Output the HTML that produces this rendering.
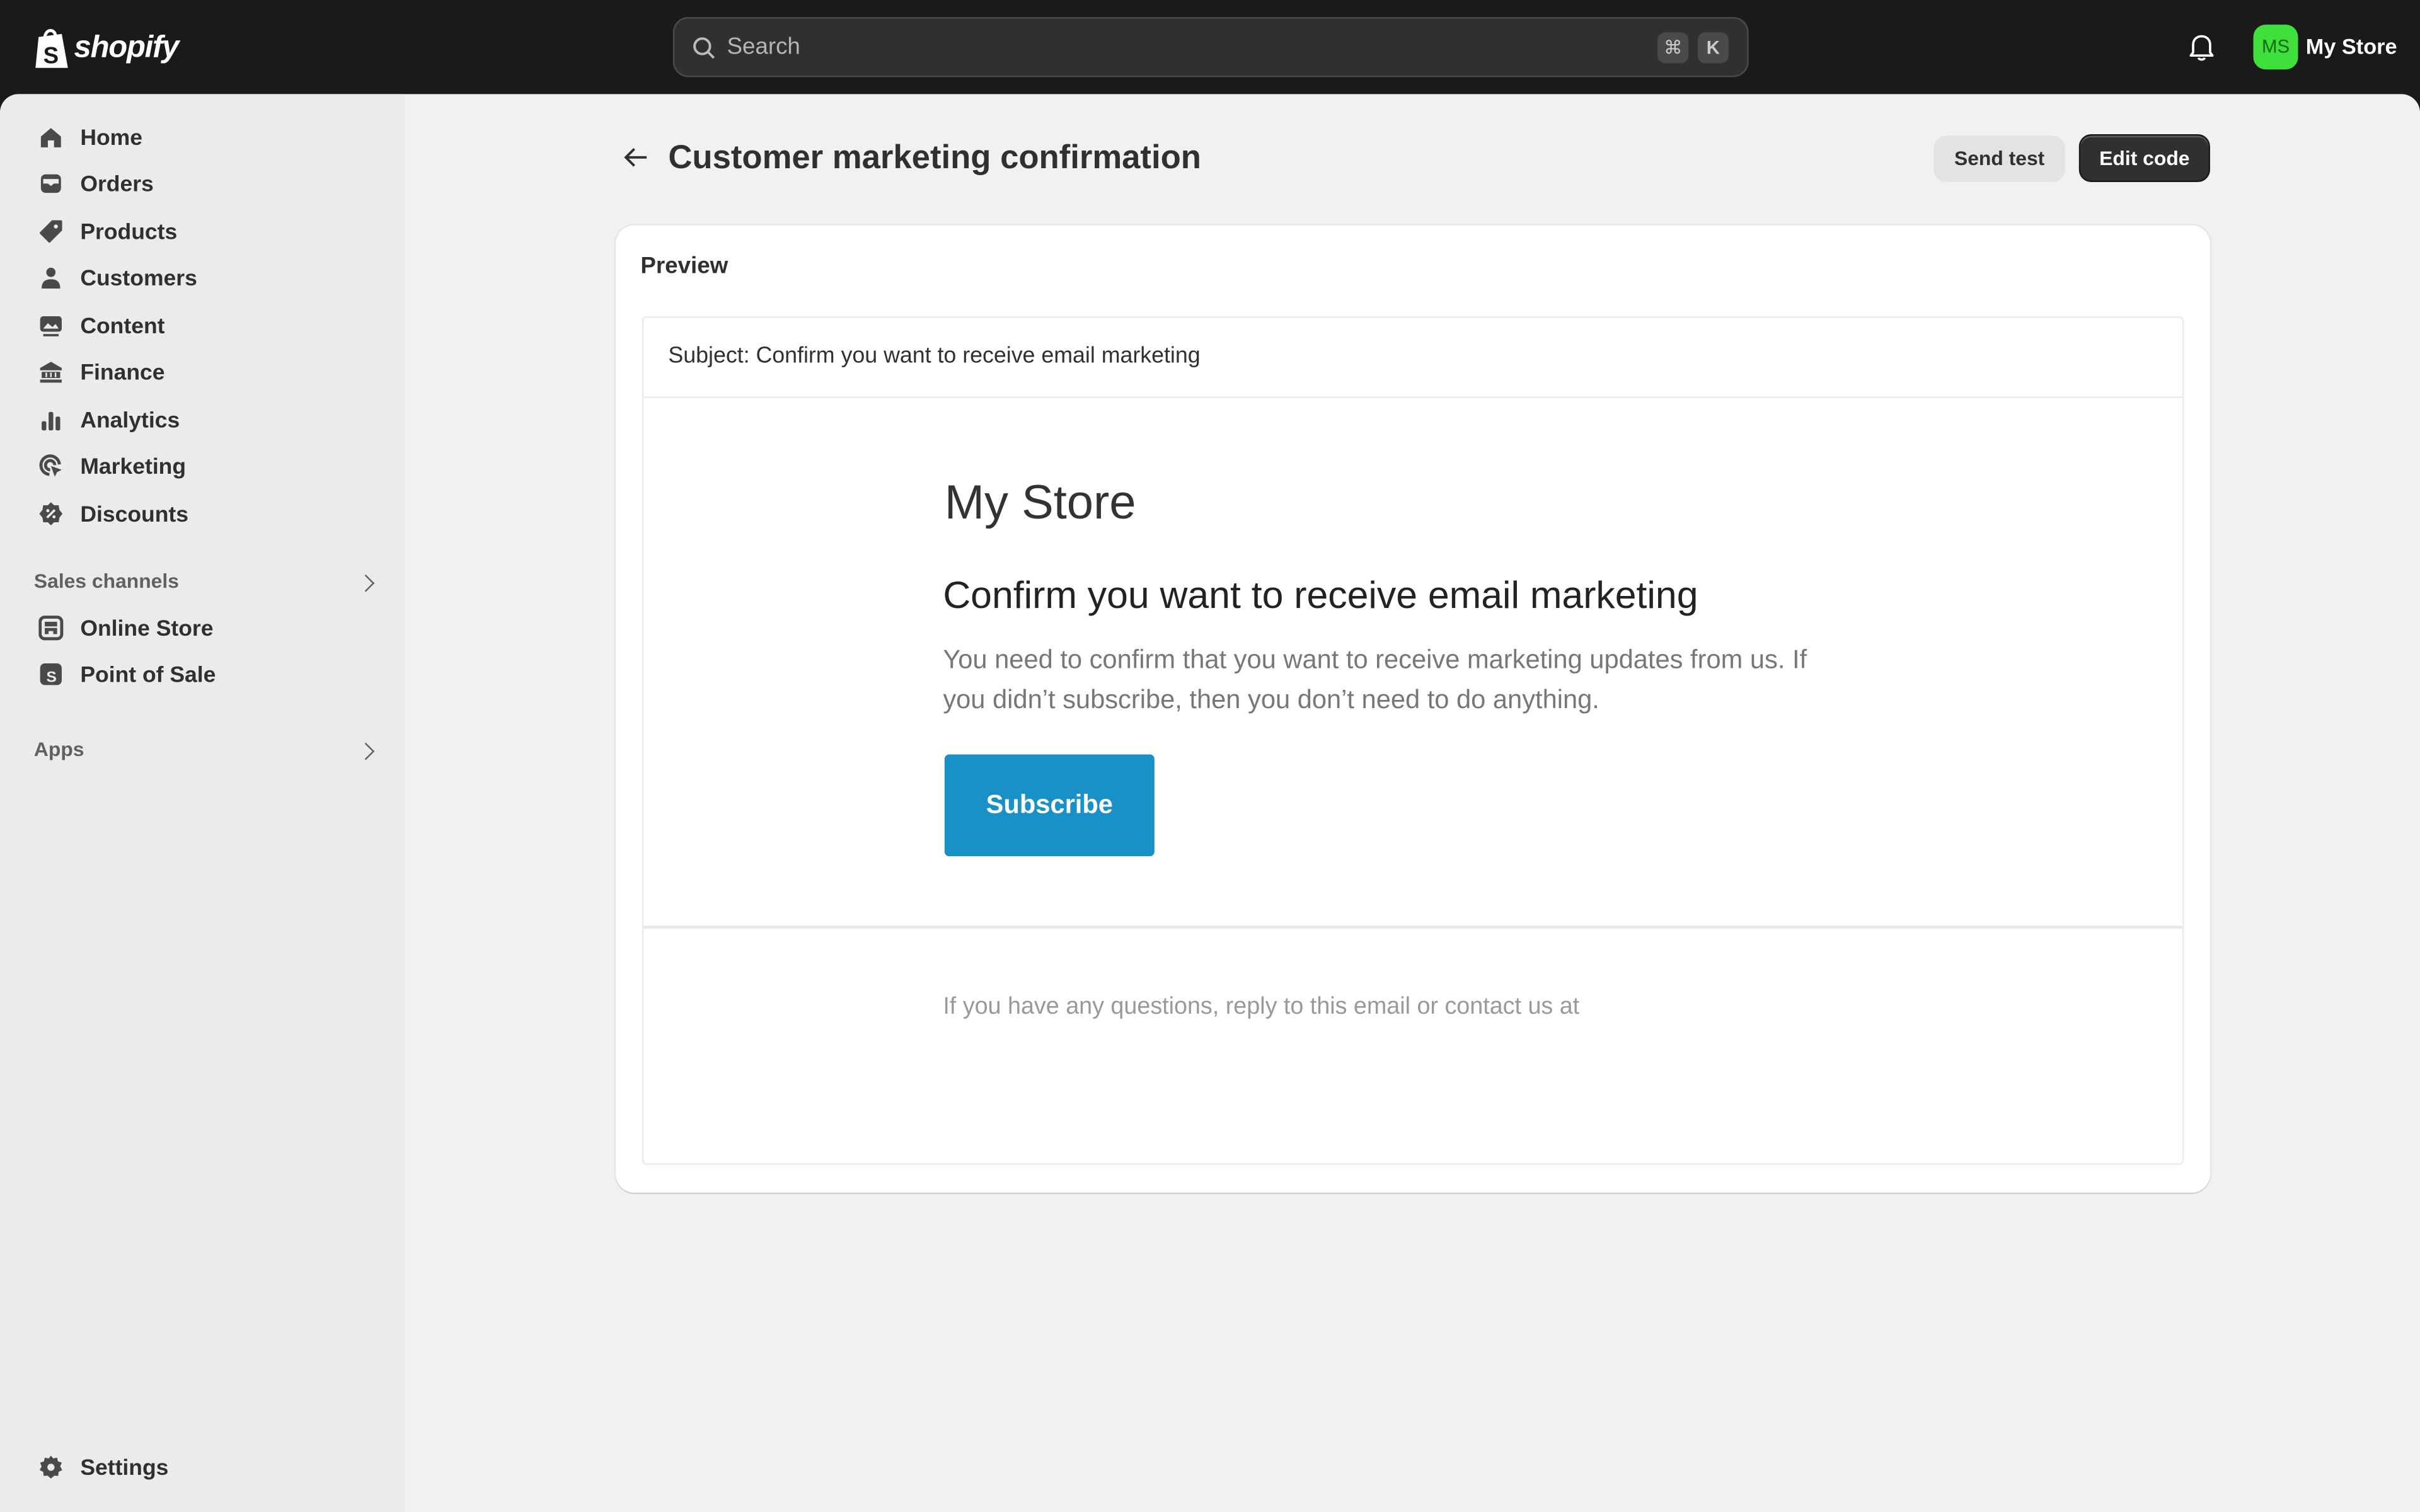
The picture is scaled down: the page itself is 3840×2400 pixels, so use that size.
<!DOCTYPE html>
<html><head><meta charset="utf-8"><style>
*{box-sizing:border-box;margin:0;padding:0}
html,body{width:3840px;height:2400px;overflow:hidden;background:#1a1a1a}
#s{position:absolute;left:0;top:0;width:1568px;height:980px;transform:scale(2.44898);transform-origin:0 0;font-family:"Liberation Sans",sans-serif;background:#1a1a1a}
.a{position:absolute}
.nav{position:absolute;left:0;width:262px;height:30px;font-size:14.5px;font-weight:bold;color:#303030;line-height:30px}
.nav span{position:absolute;left:52px;top:1px}
.nav svg{position:absolute;left:25px;top:7px;width:16px;height:16px}
.sec{position:absolute;left:22px;font-size:13px;font-weight:bold;color:#616161}
.chev{position:absolute;left:233px;width:8px;height:8px;border-right:1.5px solid #616161;border-top:1.5px solid #616161;transform:rotate(45deg)}
</style></head><body><div id="s">
<!-- top bar -->
<svg class="a" style="left:22px;top:17px" width="24" height="28" viewBox="0 0 24 28"><path d="M3 7 L18 5 L22 27 L1 27 Z" fill="#fff"/><path d="M7 8 C7 2 13 1 14 6" stroke="#fff" stroke-width="2" fill="none"/><text x="6" y="24" font-family="Liberation Sans" font-weight="bold" font-size="15" fill="#1a1a1a">S</text></svg>
<div class="a" style="left:48px;top:20px;color:#fff;font-size:20px;font-weight:bold;font-style:italic;letter-spacing:-0.5px">shopify</div>
<div class="a" style="left:436px;top:11px;width:697px;height:39px;background:#303030;border:1px solid #4a4a4a;border-radius:10px"></div>
<svg class="a" style="left:448px;top:23px" width="16" height="16" viewBox="0 0 16 16"><circle cx="7" cy="7" r="5" stroke="#bbb" stroke-width="1.6" fill="none"/><path d="M11 11 L14.5 14.5" stroke="#bbb" stroke-width="1.6"/></svg>
<div class="a" style="left:471px;top:22px;color:#b5b5b5;font-size:15px">Search</div>
<div class="a" style="left:1074px;top:21px;width:20px;height:20px;background:#4a4a4a;border-radius:5px;color:#ccc;font-size:12px;text-align:center;line-height:20px">⌘</div>
<div class="a" style="left:1100px;top:21px;width:20px;height:20px;background:#4a4a4a;border-radius:5px;color:#ccc;font-size:12px;text-align:center;line-height:20px;font-weight:bold">K</div>
<svg class="a" style="left:1418px;top:21px" width="17" height="19" viewBox="0 0 17 19"><path d="M3 13 V8 C3 4.5 5.5 2.5 8.5 2.5 C11.5 2.5 14 4.5 14 8 V13 L15.5 15 H1.5 Z" stroke="#fff" stroke-width="1.5" fill="none" stroke-linejoin="round"/><path d="M6.5 16.5 C7 18 10 18 10.5 16.5" stroke="#fff" stroke-width="1.5" fill="none"/></svg>
<div class="a" style="left:1460px;top:16px;width:29px;height:29px;background:#3fe03b;border-radius:8px;color:#156a14;font-size:12px;text-align:center;line-height:29px">MS</div>
<div class="a" style="left:1494px;top:22px;color:#fff;font-size:14px;font-weight:bold">My Store</div>
<!-- sidebar & main -->
<div class="a" style="left:0;top:61px;width:1568px;height:919px;background:#f1f1f1;border-radius:12px 12px 0 0"></div>
<div class="a" style="left:0;top:61px;width:262px;height:919px;background:#ebebeb;border-radius:12px 0 0 0"></div>

<div class="nav" style="top:74px"><svg viewBox="0 0 16 16"><path d="M1.5 7.5 L8 2 L14.5 7.5 V14.5 H10 V10 H6 V14.5 H1.5 Z" fill="#4a4a4a"/></svg><span>Home</span></div>
<div class="nav" style="top:104px"><svg viewBox="0 0 16 16"><rect x="1.5" y="2" width="13" height="12" rx="3" fill="#4a4a4a"/><path d="M3 5 H13 V8 H10 L8 9.5 L6 8 H3 Z" fill="#ebebeb"/></svg><span>Orders</span></div>
<div class="nav" style="top:135px"><svg viewBox="0 0 16 16"><path d="M9 1.5 H14.5 V7 L7 14.5 L1.5 9 Z" fill="#4a4a4a" stroke="#4a4a4a" stroke-linejoin="round" stroke-width="1.5"/><circle cx="11.2" cy="4.8" r="1.3" fill="#ebebeb"/></svg><span>Products</span></div>
<div class="nav" style="top:165px"><svg viewBox="0 0 16 16"><circle cx="8" cy="4.5" r="3" fill="#4a4a4a"/><path d="M2 15 C2 10 5 9 8 9 C11 9 14 10 14 15 Z" fill="#4a4a4a"/></svg><span>Customers</span></div>
<div class="nav" style="top:196px"><svg viewBox="0 0 16 16"><rect x="1" y="2" width="14" height="10" rx="2" fill="#4a4a4a"/><path d="M3 10 L6 6.5 L9 9 L11 7 L13 10 Z" fill="#ebebeb"/><rect x="3" y="13.5" width="10" height="1.5" fill="#4a4a4a"/></svg><span>Content</span></div>
<div class="nav" style="top:226px"><svg viewBox="0 0 16 16"><path d="M1 5.5 L8 1.5 L15 5.5 V7 H1 Z M2 8 H14 V12 H2 Z M1 13 H15 V15 H1 Z" fill="#4a4a4a"/><path d="M5 8.5 V11.5 M8 8.5 V11.5 M11 8.5 V11.5" stroke="#ebebeb" stroke-width="1"/></svg><span>Finance</span></div>
<div class="nav" style="top:257px"><svg viewBox="0 0 16 16"><rect x="2" y="9" width="3" height="6" rx="1" fill="#4a4a4a"/><rect x="6.5" y="3" width="3" height="12" rx="1" fill="#4a4a4a"/><rect x="11" y="6" width="3" height="9" rx="1" fill="#4a4a4a"/></svg><span>Analytics</span></div>
<div class="nav" style="top:287px"><svg viewBox="0 0 16 16"><path d="M13.5 7 A6 6 0 1 0 7 13.5" stroke="#4a4a4a" stroke-width="2" fill="none"/><path d="M10.5 7.5 A3 3 0 1 0 7.5 10.5" stroke="#4a4a4a" stroke-width="2" fill="none"/><path d="M8 8 L15 10.5 L12 12 L10.5 15 Z" fill="#4a4a4a"/></svg><span>Marketing</span></div>
<div class="nav" style="top:318px"><svg viewBox="0 0 16 16"><path d="M8 0.5 L10 2.5 L13 2.5 L13.5 5.5 L15.5 8 L13.5 10.5 L13 13.5 L10 13.5 L8 15.5 L6 13.5 L3 13.5 L2.5 10.5 L0.5 8 L2.5 5.5 L3 2.5 L6 2.5 Z" fill="#4a4a4a"/><path d="M5.5 10.5 L10.5 5.5" stroke="#ebebeb" stroke-width="1.5"/><circle cx="6" cy="6" r="1" fill="#ebebeb"/><circle cx="10" cy="10" r="1" fill="#ebebeb"/></svg><span>Discounts</span></div>

<div class="sec" style="top:369px">Sales channels</div><div class="chev" style="top:374px"></div>
<div class="nav" style="top:392px"><svg viewBox="0 0 16 16"><rect x="1" y="1" width="14" height="14" rx="3" fill="none" stroke="#4a4a4a" stroke-width="2"/><rect x="4" y="4" width="8" height="3" fill="#4a4a4a"/><path d="M4 8 H12 V12 H9.5 V10 H6.5 V12 H4 Z" fill="#4a4a4a"/></svg><span>Online Store</span></div>
<div class="nav" style="top:422px"><svg viewBox="0 0 16 16"><rect x="1" y="1" width="14" height="14" rx="3" fill="#4a4a4a"/><text x="5" y="13" font-size="10" font-weight="bold" fill="#ebebeb" font-family="Liberation Sans">S</text></svg><span>Point of Sale</span></div>
<div class="sec" style="top:478px">Apps</div><div class="chev" style="top:483px"></div>
<div class="nav" style="top:936px"><svg viewBox="0 0 16 16"><path d="M8 0.5 L9.5 2.3 L12 1.8 L12.5 4.2 L15 5 L14 7.5 L15.3 9.8 L13 11 L12.7 13.6 L10.2 13.4 L8 15.3 L5.8 13.4 L3.3 13.6 L3 11 L0.7 9.8 L2 7.5 L1 5 L3.5 4.2 L4 1.8 L6.5 2.3 Z" fill="#4a4a4a"/><circle cx="8" cy="8" r="2.3" fill="#ebebeb"/></svg><span>Settings</span></div>

<!-- header -->
<svg class="a" style="left:404px;top:95px" width="16" height="14" viewBox="0 0 16 14"><path d="M15 7 H2 M7 1.5 L1.5 7 L7 12.5" stroke="#303030" stroke-width="1.6" fill="none"/></svg>
<div class="a" style="left:433px;top:90px;font-size:21.5px;font-weight:bold;color:#303030">Customer marketing confirmation</div>
<div class="a" style="left:1253px;top:88px;width:85px;height:30px;background:#e3e3e3;border-radius:8px;font-size:13px;font-weight:bold;color:#303030;text-align:center;line-height:30px">Send test</div>
<div class="a" style="left:1347px;top:87px;width:85px;height:31px;background:#303030;border:1px solid #1a1a1a;border-radius:8px;font-size:13px;font-weight:bold;color:#fff;text-align:center;line-height:29px;box-shadow:inset 0 1px 0 #5a5a5a">Edit code</div>

<!-- card -->
<div class="a" style="left:399px;top:146px;width:1033px;height:627px;background:#fff;border-radius:12px;box-shadow:0 1px 0 #d4d4d4,0 0 0 1px #e6e6e6"></div>
<div class="a" style="left:415px;top:164px;font-size:15px;font-weight:bold;color:#303030">Preview</div>
<div class="a" style="left:416px;top:205px;width:999px;height:550px;border:1px solid #ebebeb;border-radius:3px"></div>
<div class="a" style="left:433px;top:223px;font-size:14.6px;color:#303030">Subject: Confirm you want to receive email marketing</div>
<div class="a" style="left:417px;top:257px;width:997px;height:1px;background:#ebebeb"></div>
<div class="a" style="left:612px;top:308px;font-size:31px;color:#333">My Store</div>
<div class="a" style="left:611px;top:373px;font-size:24.8px;color:#222">Confirm you want to receive email marketing</div>
<div class="a" style="left:611px;top:415px;width:590px;font-size:17px;line-height:26px;color:#777">You need to confirm that you want to receive marketing updates from us. If you didn’t subscribe, then you don’t need to do anything.</div>
<div class="a" style="left:612px;top:489px;width:136px;height:66px;background:#1990c6;border-radius:3px;color:#fff;font-size:17px;font-weight:bold;text-align:center;line-height:66px">Subscribe</div>
<div class="a" style="left:417px;top:600px;width:997px;height:2px;background:#e8e8e8"></div>
<div class="a" style="left:611px;top:644px;font-size:15.4px;color:#999">If you have any questions, reply to this email or contact us at</div>
</div></body></html>
